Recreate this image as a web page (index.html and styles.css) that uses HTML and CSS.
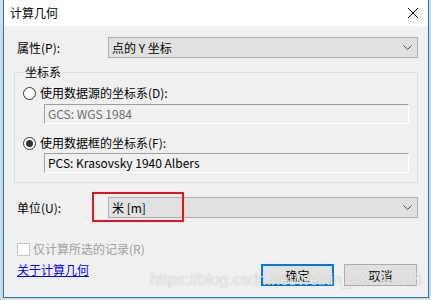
FILE: index.html
```html
<!DOCTYPE html>
<html lang="zh-CN">
<head>
  <meta charset="UTF-8">
  <title>计算几何</title>
  <link rel="stylesheet" href="styles.css">
</head>
<body>
  <div class="dialog">
    <div class="titlebar">
      <span class="title">计算几何</span>
      <svg class="close" width="12" height="12" viewBox="0 0 12 12">
        <path d="M1 1 L11 11 M11 1 L1 11" stroke="#000" stroke-width="1" fill="none"/>
      </svg>
    </div>

    <div class="content">
      <div class="field-row">
        <label class="field-label">属性(P):</label>
        <div class="combo">
          <span class="combo-text">点的 Y 坐标</span>
          <svg class="chevron" width="9" height="5" viewBox="0 0 9 5">
            <path d="M0.5 0.5 L4.5 4.5 L8.5 0.5" stroke="#444" stroke-width="1" fill="none"/>
          </svg>
        </div>
      </div>

      <!-- Coordinate system group -->
      <fieldset class="group">
        <legend>坐标系</legend>
        <div class="option"><span class="radio"></span>使用数据源的坐标系(D):</div>
        <div class="textbox readonly">GCS: WGS 1984</div>
        <div class="option option-second"><span class="radio checked"></span>使用数据框的坐标系(F):</div>
        <div class="textbox textbox-second">PCS: Krasovsky 1940 Albers</div>
      </fieldset>

      <div class="field-row unit-row">
        <label class="field-label">单位(U):</label>
        <div class="combo">
          <span class="combo-text">米 [m]</span>
          <svg class="chevron" width="9" height="5" viewBox="0 0 9 5">
            <path d="M0.5 0.5 L4.5 4.5 L8.5 0.5" stroke="#444" stroke-width="1" fill="none"/>
          </svg>
          <span class="mark"></span>
        </div>
      </div>

      <div class="check-row"><span class="checkbox"></span>仅计算所选的记录(R)</div>

      <div class="footer">
        <a class="about-link" href="#">关于计算几何</a>
        <div class="buttons">
          <button class="btn btn-default">确定</button>
          <button class="btn">取消</button>
        </div>
      </div>
    </div>

    <div class="watermark">https://blog.csdn.net/weixin_43292678</div>
  </div>
</body>
</html>
```

FILE: styles.css
```css
html, body {
  margin: 0;
  padding: 0;
}

body {
  width: 431px;
  height: 300px;
  overflow: hidden;
  background: #d3dae2;
  font-family: "Noto Sans CJK SC", sans-serif;
  font-size: 12px;
  color: #000;
}

.dialog {
  position: relative;
  width: 424px;
  height: 297px;
  margin-left: 3px;
  background: #f0f0f0;
  border: 1px solid #1a7ad0;
  border-top: none;
}

.titlebar {
  display: flex;
  align-items: center;
  justify-content: space-between;
  height: 26px;
  padding: 0 9px 0 6px;
  background: #fff;
}

.title {
  line-height: 16px;
}

.close {
  display: block;
}

.content {
  padding: 11px 10px 0 10px;
}

.field-row {
  display: flex;
  align-items: center;
  padding-left: 3px;
}

.field-label {
  width: 91px;
  line-height: 16px;
}

.combo {
  position: relative;
  display: flex;
  align-items: center;
  justify-content: space-between;
  box-sizing: border-box;
  width: 310px;
  height: 21px;
  padding: 0 5px 0 3px;
  background: #e1e1e1;
  border: 1px solid #adadad;
}

.combo-text {
  line-height: 16px;
}

.chevron {
  display: block;
}

/* red annotation box around the unit combo */
.mark {
  position: absolute;
  left: -17px;
  top: -6px;
  width: 88px;
  height: 26px;
  border: 2px solid #e8141c;
}

.group {
  margin: 6px 0 0 0;
  padding: 5px 8px 9px 8px;
  border: 1px solid #dcdcdc;
  min-inline-size: 0;
}

.group legend {
  padding: 0 2px;
  line-height: 16px;
}

.option {
  display: flex;
  align-items: center;
  gap: 4px;
  line-height: 16px;
}

.option-second {
  margin-top: 11px;
}

.radio {
  position: relative;
  box-sizing: border-box;
  width: 13px;
  height: 13px;
  border: 1px solid #333;
  border-radius: 50%;
  background: #fff;
}

.radio.checked::after {
  content: "";
  position: absolute;
  left: 2px;
  top: 2px;
  width: 7px;
  height: 7px;
  border-radius: 50%;
  background: #333;
}

.textbox {
  box-sizing: border-box;
  height: 20px;
  margin: 3px 0 0 21px;
  padding: 0 3px;
  line-height: 18px;
  border: 1px solid #a0a0a0;
  border-right-color: #fff;
  border-bottom-color: #fff;
}

.textbox.readonly {
  color: #6d6d6d;
}

.textbox-second {
  margin-top: 2px;
}

.unit-row {
  margin-top: 14px;
}

.check-row {
  display: flex;
  align-items: center;
  gap: 3px;
  margin-top: 23px;
  padding-left: 3px;
  line-height: 16px;
  color: #a0a0a0;
}

.checkbox {
  box-sizing: border-box;
  width: 13px;
  height: 13px;
  border: 1px solid #c6c6c6;
  background: #fff;
}

.footer {
  display: flex;
  justify-content: space-between;
  align-items: flex-start;
  margin-top: 5px;
  padding-left: 3px;
}

.about-link {
  line-height: 16px;
  color: #0000ff;
  text-decoration: underline;
}

.buttons {
  display: flex;
  gap: 10px;
  margin: 2px 1px 0 0;
}

.btn {
  box-sizing: border-box;
  width: 73px;
  height: 22px;
  padding: 0;
  font-family: "Noto Sans CJK SC", sans-serif;
  font-size: 12px;
  color: #000;
  background: #e1e1e1;
  border: 1px solid #adadad;
}

.btn-default {
  border-color: #0078d7;
  box-shadow: inset 0 0 0 1px #0078d7;
}

.watermark {
  position: absolute;
  left: 146px;
  top: 271px;
  font-family: "Liberation Sans", sans-serif;
  font-size: 16px;
  line-height: 18px;
  color: rgba(255, 255, 255, 0.75);
  text-shadow: 0 0 1px rgba(120, 120, 120, 0.6);
  white-space: nowrap;
  pointer-events: none;
}
```
